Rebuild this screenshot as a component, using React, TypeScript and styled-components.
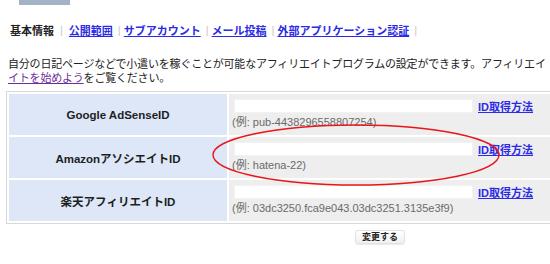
import React from "react";
import styled, { createGlobalStyle } from "styled-components";

const Global = createGlobalStyle`
  html, body { margin: 0; padding: 0; background: #fff; overflow: hidden; }
  body {
    width: 550px; height: 264px;
    font-family: "Liberation Sans", "Noto Sans CJK JP", sans-serif;
    color: #222;
  }
`;

const Page = styled.div`
  position: relative;
  width: 550px;
  height: 264px;
  overflow: hidden;
`;

const TopTab = styled.div`
  margin-left: 19px;
  width: 51px;
  height: 5px;
  background: #a3b3c7;
`;

const Tabs = styled.nav`
  display: flex;
  align-items: center;
  height: 16px;
  margin: 17px 0 0 10px;
  font-size: 11px;
  font-weight: bold;
  white-space: nowrap;
`;

const Current = styled.span`
  color: #222;
`;

const TabLink = styled.a`
  color: #2b2be6;
  text-decoration: underline;
`;

const Sep = styled.span<{ $l: number; $r: number }>`
  color: #c8c8c8;
  font-weight: normal;
  margin: 0 ${(p) => p.$r}px 0 ${(p) => p.$l}px;
`;

const Intro = styled.p`
  margin: 19px 0 0 8px;
  font-size: 11px;
  line-height: 14px;
  white-space: nowrap;
  letter-spacing: -0.2px;
`;

const Visited = styled.a`
  color: #6b2f9a;
  text-decoration: underline;
`;

const Table = styled.div`
  margin: 6px 0 0 6px;
  width: 560px;
  border: 1px solid #d8d8d8;
  padding: 2px;
  display: grid;
  grid-template-columns: 218px 1fr;
  gap: 2px;
  background: #fff;
`;

const Label = styled.div`
  background: #dde7f7;
  display: flex;
  align-items: center;
  justify-content: center;
  height: 41px;
  font-size: 11.5px;
  font-weight: bold;
  color: #1e1e1e;
`;

const Value = styled.div`
  background: #eeeeee;
  height: 41px;
  padding: 4px 0 0 5px;
  box-sizing: border-box;
`;

const InputRow = styled.div`
  display: flex;
  align-items: center;
  gap: 5px;
`;

const Field = styled.input`
  width: 239px;
  height: 14px;
  box-sizing: border-box;
  border: 1px solid #f2f2f2;
  background: #fff;
  padding: 0 2px;
  font-size: 11px;
  outline: none;
`;

const HelpLink = styled.a`
  color: #2b2be6;
  text-decoration: underline;
  font-size: 11px;
  font-weight: bold;
  white-space: nowrap;
`;

const Hint = styled.div`
  margin: 1px 0 0 -2px;
  font-size: 11px;
  line-height: 14px;
  color: #6a6a6a;
  white-space: nowrap;
`;

const Actions = styled.div`
  display: flex;
  justify-content: center;
  margin: 6px 0 0 300px;
  width: 160px;
`;

const Button = styled.button`
  height: 14px;
  padding: 0 6px;
  border: 1px solid #e2e2e2;
  border-radius: 3px;
  background: linear-gradient(#ffffff, #f1f1f1);
  box-shadow: 0 1px 1px rgba(0, 0, 0, 0.08);
  font-family: "Noto Sans CJK JP", sans-serif;
  font-size: 9px;
  font-weight: bold;
  color: #222;
  line-height: 12px;
`;

const Annotation = styled.svg`
  position: absolute;
  left: 0;
  top: 0;
  pointer-events: none;
`;

const rows = [
  { label: "Google AdSenseID", hint: "(例: pub-4438296558807254)" },
  { label: "AmazonアソシエイトID", hint: "(例: hatena-22)" },
  { label: "楽天アフィリエイトID", hint: "(例: 03dc3250.fca9e043.03dc3251.3135e3f9)" },
];

export default function App() {
  return (
    <>
      <Global />
      <Page>
        <TopTab />
        <Tabs>
          <Current>基本情報</Current>
          <Sep $l={6} $r={6}>|</Sep>
          <TabLink href="#">公開範囲</TabLink>
          <Sep $l={5} $r={3}>|</Sep>
          <TabLink href="#">サブアカウント</TabLink>
          <Sep $l={5} $r={3}>|</Sep>
          <TabLink href="#">メール投稿</TabLink>
          <Sep $l={5} $r={3}>|</Sep>
          <TabLink href="#">外部アプリケーション認証</TabLink>
          <Sep $l={5} $r={3}>|</Sep>
        </Tabs>
        <Intro>
          自分の日記ページなどで小遣いを稼ぐことが可能なアフィリエイトプログラムの設定ができます。アフィリエイ
          <br />
          <Visited href="#">イトを始めよう</Visited>をご覧ください。
        </Intro>
        <Table>
          {rows.map((r) => (
            <React.Fragment key={r.label}>
              <Label>{r.label}</Label>
              <Value>
                <InputRow>
                  <Field type="text" />
                  <HelpLink href="#">ID取得方法</HelpLink>
                </InputRow>
                <Hint>{r.hint}</Hint>
              </Value>
            </React.Fragment>
          ))}
        </Table>
        <Actions>
          <Button type="button">変更する</Button>
        </Actions>
        <Annotation width="550" height="264" viewBox="0 0 550 264">
          <ellipse cx="356" cy="155" rx="143" ry="30" fill="none" stroke="#e8161b" strokeWidth="1.4" />
        </Annotation>
      </Page>
    </>
  );
}
